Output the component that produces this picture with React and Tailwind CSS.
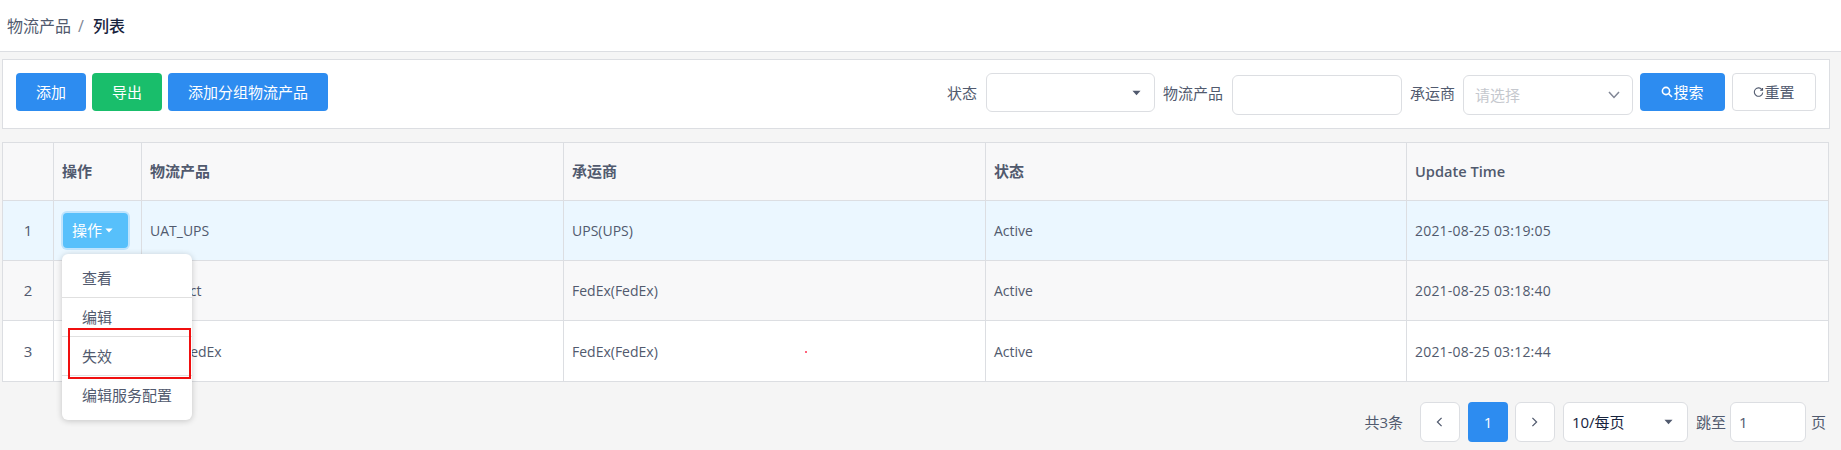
import React from "react";

const rows = [
  { n: 1, p: "UAT_UPS", c: "UPS(UPS)", t: "2021-08-25 03:19:05", bg: "bg-[#ebf7ff]" },
  { n: 2, p: "Product", c: "FedEx(FedEx)", t: "2021-08-25 03:18:40", bg: "bg-[#f8f8f9]" },
  { n: 3, p: "UAT_FedEx", c: "FedEx(FedEx)", t: "2021-08-25 03:12:44", bg: "bg-white", dot: true },
];

function Caret({ className = "" }) {
  return (
    <svg viewBox="0 0 10 6" className={className} fill="currentColor">
      <path d="M0.5 0.5h9L5 5.5z" />
    </svg>
  );
}

export default function App() {
  return (
    <div className="relative w-[1841px] h-[450px] overflow-hidden bg-[#f5f5f5] text-[15px] text-[#515a6e] font-['Open_Sans','Noto_Sans_CJK_SC',sans-serif]">
      {/* breadcrumb */}
      <div className="h-[52px] bg-white border-b border-[#dcdee2] pl-[7px] pt-[14px] leading-[24px] text-[16px] flex">
        <span className="text-[#515a6e]">物流产品</span>
        <span className="ml-[7px] mr-[9px] text-[#808695]">/</span>
        <span className="font-medium text-[#17233d]">列表</span>
      </div>

      {/* toolbar */}
      <div className="mt-[7px] ml-[2px] w-[1828px] h-[70px] bg-white border border-[#dcdee2] flex justify-between pl-[13px] pr-[13px] pt-[13px]">
        <div className="flex gap-[6px]">
          <button className="w-[70px] h-[38px] rounded-[4px] bg-[#2d8cf0] text-white">添加</button>
          <button className="w-[70px] h-[38px] rounded-[4px] bg-[#19be6b] text-white">导出</button>
          <button className="w-[160px] h-[38px] rounded-[4px] bg-[#2d8cf0] text-white">添加分组物流产品</button>
        </div>
        <div className="flex">
          <span className="leading-[40px]">状态</span>
          <div className="ml-[9px] w-[169px] h-[39px] rounded-[6px] border border-[#dcdee2] bg-white flex items-center justify-end pr-[13px]">
            <Caret className="w-[9px] h-[6px] text-[#515a6e]" />
          </div>
          <span className="ml-[8px] leading-[40px]">物流产品</span>
          <div className="ml-[9px] mt-[2px] w-[170px] h-[40px] rounded-[6px] border border-[#dcdee2] bg-white" />
          <span className="ml-[8px] leading-[40px]">承运商</span>
          <div className="ml-[8px] mt-[2px] w-[170px] h-[40px] rounded-[6px] border border-[#dcdee2] bg-white flex items-center justify-between pl-[11px] pr-[12px]">
            <span className="text-[#c5c8ce]">请选择</span>
            <svg viewBox="0 0 12 8" className="w-[12px] h-[8px] text-[#808695]" fill="none" stroke="currentColor" strokeWidth="1.5">
              <path d="M1 1l5 5.5L11 1" />
            </svg>
          </div>
          <button className="ml-[7px] w-[85px] h-[38px] rounded-[4px] bg-[#2d8cf0] text-white flex items-center justify-center">
            <svg viewBox="0 0 12 12" className="w-[12px] h-[12px]" fill="none" stroke="currentColor" strokeWidth="1.6">
              <circle cx="5" cy="5" r="3.6" />
              <path d="M7.7 7.7L11 11" />
            </svg>
            <span>搜索</span>
          </button>
          <button className="ml-[7px] w-[84px] h-[38px] rounded-[4px] bg-white border border-[#dcdee2] flex items-center justify-center">
            <svg viewBox="0 0 12 12" className="w-[11px] h-[11px]" fill="none" stroke="currentColor" strokeWidth="1.2">
              <path d="M10 3.2A4.6 4.6 0 1 0 10.6 6" />
              <path d="M10.4 1v2.6H7.8" />
            </svg>
            <span>重置</span>
          </button>
        </div>
      </div>

      {/* table */}
      <div className="mt-[13px] ml-[2px] w-[1827px]">
        <table className="w-full table-fixed border-collapse border border-[#dcdee2]">
          <colgroup>
            <col className="w-[51px]" />
            <col className="w-[88px]" />
            <col className="w-[422px]" />
            <col className="w-[422px]" />
            <col className="w-[421px]" />
            <col />
          </colgroup>
          <thead>
            <tr className="h-[58px] bg-[#f8f8f9]">
              <th className="border border-[#dcdee2]" />
              {["操作", "物流产品", "承运商", "状态"].map((h) => (
                <th key={h} className="border border-[#dcdee2] text-left font-semibold pl-[8px]">
                  {h}
                </th>
              ))}
              <th className="border border-[#dcdee2] text-left font-semibold pl-[8px] text-[14.6px]">Update Time</th>
            </tr>
          </thead>
          <tbody className="text-[14px]">
            {rows.map((r, i) => (
              <tr key={r.n} className={`${i === 2 ? "h-[61px]" : "h-[60px]"} ${r.bg}`}>
                <td className="border border-[#dcdee2] text-center text-[15px]">{r.n}</td>
                <td className="border border-[#dcdee2] pl-[9px]">
                  {i === 0 && (
                    <button className="w-[65px] h-[35px] rounded-[4px] bg-[#57c0fb] text-white text-[15px] flex items-center pl-[9px] gap-[3px] ring-2 ring-[#bfe4fd]">
                      操作
                      <Caret className="w-[8px] h-[5px]" />
                    </button>
                  )}
                </td>
                <td className="border border-[#dcdee2] pl-[8px]">{r.p}</td>
                <td className="border border-[#dcdee2] pl-[8px]">{r.c}</td>
                <td className="border border-[#dcdee2] pl-[8px]">Active</td>
                <td className="border border-[#dcdee2] pl-[8px] tracking-[0.2px]">{r.t}</td>
              </tr>
            ))}
          </tbody>
        </table>
      </div>

      {/* pagination */}
      <div className="mt-[20px] w-[1826px] flex items-center justify-end h-[40px]">
        <span>共3条</span>
        <button className="ml-[17px] w-[40px] h-[40px] rounded-[6px] bg-white border border-[#dcdee2] flex items-center justify-center">
          <svg viewBox="0 0 8 12" className="w-[7px] h-[10px]" fill="none" stroke="currentColor" strokeWidth="1.5"><path d="M6.5 1L1.5 6l5 5" /></svg>
        </button>
        <button className="ml-[8px] w-[40px] h-[40px] rounded-[4px] bg-[#2d8cf0] text-white">1</button>
        <button className="ml-[7px] w-[40px] h-[40px] rounded-[6px] bg-white border border-[#dcdee2] flex items-center justify-center">
          <svg viewBox="0 0 8 12" className="w-[7px] h-[10px]" fill="none" stroke="currentColor" strokeWidth="1.5"><path d="M1.5 1l5 5-5 5" /></svg>
        </button>
        <div className="ml-[8px] w-[125px] h-[40px] rounded-[6px] bg-white border border-[#dcdee2] flex items-center justify-between pl-[8px] pr-[14px] text-[#17233d]">
          <span>10/每页</span>
          <Caret className="w-[9px] h-[6px] text-[#515a6e]" />
        </div>
        <span className="ml-[8px]">跳至</span>
        <div className="ml-[4px] w-[76px] h-[40px] rounded-[6px] bg-white border border-[#dcdee2] flex items-center pl-[8px]">1</div>
        <span className="ml-[5px]">页</span>
      </div>

      {/* open dropdown menu */}
      <div className="absolute left-[62px] top-[254px] w-[130px] h-[166px] py-[5px] rounded-[6px] bg-white shadow-[0_1px_6px_rgba(0,0,0,0.2)]">
        {["查看", "编辑", "失效", "编辑服务配置"].map((m, i) => (
          <div key={m} className={`h-[39px] flex items-center pl-[20px] ${i < 3 ? "border-b border-[#e0e0e0]" : ""}`}>
            {m}
          </div>
        ))}
      </div>

      {/* annotations */}
      <div className="absolute left-[68px] top-[328px] w-[123px] h-[51px] border-2 border-[#f00f0f]" />
      <div className="absolute left-[805px] top-[351px] w-[2px] h-[2px] rounded-full bg-[#ff3050]" />
    </div>
  );
}
